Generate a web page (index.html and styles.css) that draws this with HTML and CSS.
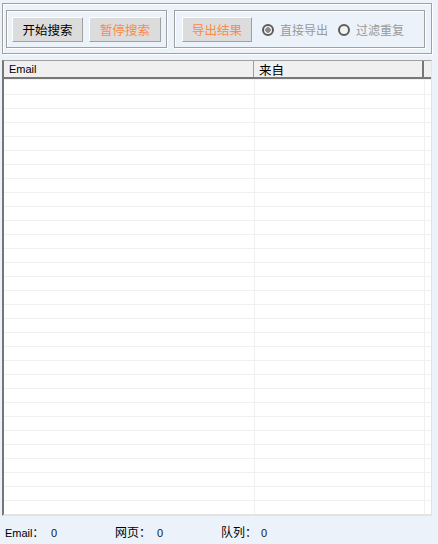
FILE: index.html
```html
<!DOCTYPE html>
<html lang="zh-CN">
<head>
    <meta charset="UTF-8">
    <title>Email 搜索</title>
    <link rel="stylesheet" href="styles.css">
</head>
<body>
    <div class="toolbar">
        <div class="group">
            <button class="btn btn-start">开始搜索</button>
            <button class="btn btn-pause btn-off">暂停搜索</button>
        </div>
        <div class="group group-export">
            <button class="btn btn-export btn-off">导出结果</button>
            <label class="radio"><span class="dot checked"></span>直接导出</label>
            <label class="radio"><span class="dot"></span>过滤重复</label>
        </div>
    </div>

    <div class="list">
        <div class="list-head">
            <div class="head-col head-email">Email</div>
            <div class="head-col head-from">来自</div>
            <div class="head-col head-rest"></div>
        </div>
        <div class="list-body">
            <div class="body-col body-email"></div>
            <div class="body-col body-from"></div>
            <div class="body-col body-rest"></div>
        </div>
    </div>

    <div class="status">
        <span class="stat stat-email"><span class="stat-label">Email：</span><span class="stat-value">0</span></span>
        <span class="stat stat-page"><span class="stat-label">网页：</span><span class="stat-value">0</span></span>
        <span class="stat stat-queue"><span class="stat-label">队列：</span><span class="stat-value">0</span></span>
    </div>
</body>
</html>
```

FILE: styles.css
```css
body {
    margin: 0;
    width: 438px;
    height: 544px;
    overflow: hidden;
    background-color: #ebf2fa;
    font-family: "Liberation Sans", "Noto Sans CJK SC", sans-serif;
    font-size: 12px;
    color: #000;
}
.toolbar {
    display: flex;
    gap: 7px;
    box-sizing: border-box;
    width: 430px;
    height: 51px;
    margin: 3px 0 0 2px;
    padding: 6px 6px 0 3px;
    border: 1px solid #a0a0a0;
    box-shadow: inset 1px 1px #fff, 1px 1px #fff;
}
.group {
    display: flex;
    align-items: flex-start;
    gap: 6px;
    box-sizing: border-box;
    width: 161px;
    height: 38px;
    padding: 6px 5px 0;
    border: 1px solid #a0a0a0;
    box-shadow: inset 1px 1px #fff, 1px 1px #fff;
}
.group-export {
    width: 251px;
    gap: 0;
    padding-left: 7px;
}
.btn {
    box-sizing: border-box;
    height: 25px;
    padding: 0;
    background: #dcdcdc;
    border: 1px solid;
    border-color: #fff #a0a0a0 #a0a0a0 #fff;
    font-family: "Noto Sans CJK SC", sans-serif;
    font-size: 12.5px;
    color: #000;
}
.btn-start {
    width: 71px;
}
.btn-pause {
    width: 72px;
}
.btn-export {
    width: 70px;
}
.btn-off {
    color: #ff8844;
}
.radio {
    display: flex;
    align-items: center;
    height: 25px;
    margin-left: 10px;
    font-family: "Noto Sans CJK SC", sans-serif;
    font-size: 12px;
    color: #999;
}
.dot {
    box-sizing: border-box;
    width: 12px;
    height: 12px;
    margin-right: 6px;
    border: 2px solid #5c5c5c;
    border-radius: 50%;
    background: #f2f2f2;
}
.dot.checked {
    background: radial-gradient(circle, #8a8a8a 0 2.5px, #f2f2f2 3px);
}
.list {
    display: flex;
    flex-direction: column;
    box-sizing: border-box;
    width: 430px;
    height: 456px;
    margin: 6px 0 0 2px;
    background: #fff;
    border-top: 1px solid #a0a0a0;
    border-left: 2px solid #767676;
    border-right: 1px solid #e3e3e3;
    border-bottom: 2px solid #e3e3e3;
}
.list-head {
    display: flex;
    height: 18px;
    box-sizing: border-box;
    background: #f0f0f0;
    border-bottom: 2px solid #777;
}
.head-col {
    box-sizing: border-box;
    padding: 1px 0 0 5px;
    line-height: 15px;
}
.head-email {
    width: 250px;
    border-right: 1px solid #a0a0a0;
    font-size: 11px;
}
.head-from {
    width: 170px;
    border-right: 2px solid #777;
    font-family: "Noto Sans CJK SC", sans-serif;
    font-size: 12.5px;
}
.head-rest {
    flex: 1;
}
.list-body {
    display: flex;
    flex: 1;
    background: repeating-linear-gradient(to bottom, #fff 0 13px, #f0f0f0 13px 14px);
    background-position: 0 2px;
}
.body-col {
    box-sizing: border-box;
}
.body-email {
    width: 251px;
    border-right: 1px solid #f0f0f0;
}
.body-from {
    width: 170px;
    border-right: 1px solid #f0f0f0;
}
.body-rest {
    flex: 1;
}
.status {
    display: flex;
    padding: 10px 0 0 5px;
    line-height: 14px;
}
.stat-label {
    display: inline-block;
}
.stat-value {
    color: #101428;
    font-size: 11px;
}
.stat-email {
    width: 110px;
}
.stat-email .stat-label {
    width: 46px;
    font-size: 11px;
}
.stat-page {
    width: 106px;
}
.stat-page .stat-label {
    width: 42px;
}
.stat-queue .stat-label {
    width: 40px;
}
```
